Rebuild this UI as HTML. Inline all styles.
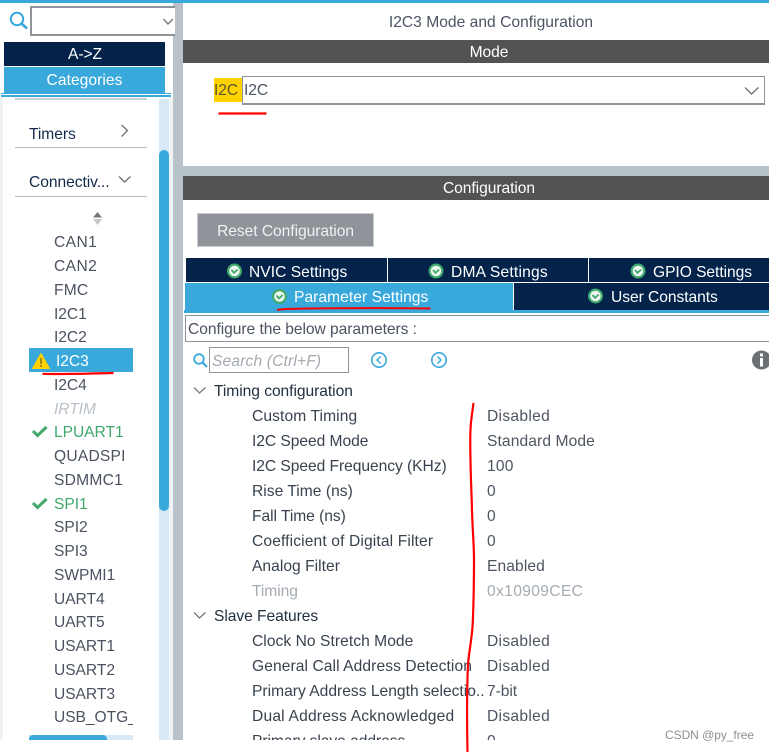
<!DOCTYPE html>
<html><head><meta charset="utf-8"><style>
html,body{margin:0;padding:0;background:#fff}
#p{position:relative;width:769px;height:752px;overflow:hidden;background:#fff;font-family:"Liberation Sans",sans-serif;font-size:15.6px;letter-spacing:-.05px;color:#3f4a5a}
#p div{position:absolute;white-space:nowrap}
.t{line-height:27px;height:24px}
.c{text-align:center}
.w{color:#fff}
.hd{color:#132a4a}
.lab{left:252px;color:#38424f}
.val{left:487px;color:#4d5561}
.it{left:54px;color:#4b5361}
.g{color:#3fa96b}
svg{position:absolute;overflow:visible}
</style></head><body><div id="p">
<!-- structural -->
<div style="left:0;top:0;width:769px;height:3px;background:#39a9dc"></div>
<div style="left:173px;top:3px;width:10px;height:737px;background:#b7c2c9"></div>
<div style="left:0;top:97px;width:3px;height:643px;background:#f0f2f5"></div>
<div style="left:169px;top:97px;width:4px;height:643px;background:#f0f2f5"></div>

<!-- sidebar search -->
<svg style="left:9px;top:11px" width="20" height="20" fill="none" stroke="#39a9dc"><circle cx="8" cy="8" r="6.2" stroke-width="2"/><path d="M12.5 12.5L18 17.5" stroke-width="2.6"/></svg>
<div style="left:30px;top:6px;width:143px;height:26px;border:2px solid #8e9499;border-right:none;background:#fff"></div>
<svg style="left:163px;top:18px" width="11" height="8" fill="none" stroke="#777"><path d="M0.5 1L5 6L10 1" stroke-width="1.4"/></svg>
<div class="c w t" style="left:5px;top:42px;width:160px;height:24px;line-height:26px;background:#03234b;box-shadow:-1px 0 0 #03234b">A-&gt;Z</div>
<div class="c w t" style="left:4px;top:67px;width:161px;height:26px;line-height:28px;background:#39a9dc;letter-spacing:.05px">Categories</div>
<div style="left:1px;top:93px;width:170px;height:1px;background:#39a9dc"></div>
<div style="left:1px;top:95px;width:170px;height:2px;background:#39a9dc"></div>

<div style="left:15px;top:98px;width:132px;height:2px;background:#c3cede"></div>
<div style="left:159px;top:99px;width:10px;height:641px;background:#d8e8f5"></div>
<div style="left:159px;top:150px;width:10px;height:361px;background:#39a9dc;border-radius:5px"></div>

<div class="t hd" style="left:29px;top:121px">Timers</div>
<svg style="left:120px;top:124px" width="10" height="14" fill="none" stroke="#777"><path d="M1.5 1L7.5 6.5L1.5 12.5" stroke-width="1.4"/></svg>
<div style="left:15px;top:147px;width:132px;height:1px;background:#b7bdc2"></div>
<div class="t hd" style="left:29px;top:169px;width:82px;overflow:hidden">Connectiv...</div>
<svg style="left:118px;top:175px" width="14" height="10" fill="none" stroke="#777"><path d="M1 1.5L6.5 7L12.5 1.5" stroke-width="1.4"/></svg>
<div style="left:15px;top:196px;width:132px;height:1px;background:#b7bdc2"></div>
<svg style="left:92px;top:212px" width="11" height="14"><path d="M5.5 0L10 5.5H1Z" fill="#777"/><path d="M1 7H10L5.5 13Z" fill="#c5c9cc"/></svg>

<div class="t it" style="top:229px;letter-spacing:.4px">CAN1</div>
<div class="t it" style="top:253px;letter-spacing:.4px">CAN2</div>
<div class="t it" style="top:277px;letter-spacing:.2px">FMC</div>
<div class="t it" style="top:301px">I2C1</div>
<div class="t it" style="top:324px">I2C2</div>
<div style="left:29px;top:348px;width:104px;height:24px;background:#39a9dc"></div>
<svg style="left:32px;top:353px" width="18" height="16"><path d="M9 0.5L17.5 15.5H0.5Z" fill="#ffd200" stroke="#ffd200" stroke-linejoin="round"/><rect x="8.2" y="5" width="1.6" height="6" fill="#8a7a20"/><rect x="8.2" y="12" width="1.6" height="2" fill="#8a7a20"/></svg>
<div class="t w" style="left:56px;top:348px">I2C3</div>
<div class="t it" style="top:372px">I2C4</div>
<div class="t it" style="top:396px;color:#b9c0c8;font-style:italic">IRTIM</div>
<svg style="left:32px;top:425px" width="16" height="13" fill="none" stroke="#3fa96b"><path d="M1 6L5.5 10.5L14.5 2" stroke-width="3"/></svg>
<div class="t it g" style="top:419px">LPUART1</div>
<div class="t it" style="top:443px;letter-spacing:.22px">QUADSPI</div>
<div class="t it" style="top:467px;letter-spacing:.25px">SDMMC1</div>
<svg style="left:32px;top:497px" width="16" height="13" fill="none" stroke="#3fa96b"><path d="M1 6L5.5 10.5L14.5 2" stroke-width="3"/></svg>
<div class="t it g" style="top:491px">SPI1</div>
<div class="t it" style="top:514px">SPI2</div>
<div class="t it" style="top:538px">SPI3</div>
<div class="t it" style="top:562px">SWPMI1</div>
<div class="t it" style="top:586px">UART4</div>
<div class="t it" style="top:609px">UART5</div>
<div class="t it" style="top:633px">USART1</div>
<div class="t it" style="top:657px">USART2</div>
<div class="t it" style="top:681px">USART3</div>
<div class="t it" style="top:704px;width:79px;overflow:hidden">USB_OTG_FS</div>
<div style="left:29px;top:735px;width:104px;height:5px;background:#d8e8f5"></div>
<div style="left:29px;top:735px;width:78px;height:5px;background:#39a9dc;border-radius:4px 4px 0 0"></div>
<svg style="left:42px;top:371px" width="72" height="5"><path d="M0.5 2.8C20 3.5 50 2.5 71.5 2" fill="none" stroke="#f00" stroke-width="2.2"/></svg>

<!-- header panels -->
<div class="t c" style="left:183px;top:9px;width:616px;color:#4b5563;letter-spacing:.02px">I2C3 Mode and Configuration</div>
<div class="t c w" style="left:183px;top:40px;width:612px;height:23px;line-height:25px;background:#525453">Mode</div>
<div style="left:183px;top:166px;width:586px;height:10px;background:#b7c2c9"></div>
<div class="t c w" style="left:183px;top:176px;width:612px;height:24px;line-height:26px;background:#525453">Configuration</div>
<div style="left:214px;top:78px;width:28px;height:24px;line-height:26px;background:#ffd200;color:#5a5530">I2C</div>
<div style="left:242px;top:76px;width:520px;height:26px;line-height:28px;border:1px solid #8e9499;border-bottom-width:2px;border-right-width:1px;padding-left:1px;background:#fff;color:#4b5563">I2C</div>
<svg style="left:744px;top:86px" width="16" height="10" fill="none" stroke="#777"><path d="M1 1.5L7.5 8L14.5 1.5" stroke-width="1.4"/></svg>
<svg style="left:218px;top:111px" width="50" height="5"><path d="M0.5 2.5H48.5" stroke="#f00" stroke-width="2.2"/></svg>

<!-- reset -->
<div class="t c" style="left:197px;top:213px;width:175px;height:32px;line-height:35px;background:#8e9499;border:1px solid #c7cbce;color:#f0f2f3">Reset Configuration</div>

<!-- tabs -->
<div style="left:186px;top:258px;width:201px;height:24px;background:#03234b"></div>
<div style="left:388px;top:258px;width:200px;height:24px;background:#03234b"></div>
<div style="left:589px;top:258px;width:180px;height:24px;background:#03234b"></div>
<div style="left:185px;top:283px;width:328px;height:27px;background:#39a9dc"></div>
<div style="left:514px;top:283px;width:255px;height:27px;background:#03234b"></div>
<div style="left:184px;top:310px;width:585px;height:3px;background:#39a9dc"></div>
<div class="t w" style="left:249px;top:259px;letter-spacing:.03px">NVIC Settings</div>
<div class="t w" style="left:451px;top:259px;letter-spacing:.2px">DMA Settings</div>
<div class="t w" style="left:653px;top:259px">GPIO Settings</div>
<div class="t w" style="left:294px;top:284px;letter-spacing:.05px">Parameter Settings</div>
<div class="t w" style="left:611px;top:284px">User Constants</div>
<svg style="left:0;top:0" width="769" height="320">
<defs><g id="k"><circle r="7.5" fill="#3fa96b"/><circle r="5.3" fill="#eef6f1"/><path d="M-3-1L-.5 1.8L3.2-1.5" fill="none" stroke="#3fa96b" stroke-width="1.8"/></g></defs>
<use href="#k" x="234.5" y="271"/><use href="#k" x="436" y="271"/><use href="#k" x="638" y="271"/><use href="#k" x="279.500" y="296.500"/><use href="#k" x="595.500" y="296"/>
</svg>
<svg style="left:276px;top:306px" width="156" height="6"><path d="M1 4C5 3 8 3 30 2.500C70 2 120 2 154.500 2.500" fill="none" stroke="#f00" stroke-width="2"/></svg>

<!-- configure box -->
<div style="left:185px;top:315px;width:584px;height:25px;border-top:1px solid #8e9499;border-left:1px solid #8e9499;border-bottom:1px solid #8e9499"></div>
<div class="t" style="left:188px;top:316px;color:#4b5260">Configure the below parameters :</div>

<!-- search row -->
<svg style="left:193px;top:353px" width="15" height="16" fill="none" stroke="#39a9dc"><circle cx="6" cy="6" r="4.800" stroke-width="1.800"/><path d="M9.500 9.500L14 14" stroke-width="2.200"/></svg>
<div style="left:209px;top:347px;width:138px;height:24px;border:1px solid #8e9499"></div>
<div class="t" style="left:212px;top:348px;color:#a3a9b0;font-style:italic;letter-spacing:.15px">Search (Ctrl+F)</div>
<svg style="left:370px;top:351px" width="80" height="18" fill="none" stroke="#39a9dc">
<circle cx="9" cy="9" r="7.200" stroke-width="1.600"/><path d="M10.500 5.500L7 9L10.500 12.500" stroke-width="1.500"/>
<circle cx="69" cy="9" r="7.200" stroke-width="1.600"/><path d="M67.500 5.500L71 9L67.500 12.500" stroke-width="1.500"/></svg>
<svg style="left:752px;top:350px" width="20" height="20"><circle cx="9.500" cy="10" r="9.500" fill="#6b6f73"/><rect x="8" y="8" width="3" height="8.500" fill="#fff"/><rect x="8" y="3.500" width="3" height="3" fill="#fff"/></svg>

<!-- tree -->
<div style="left:183px;top:378px;width:586px;height:362px;overflow:hidden">
<svg style="left:10px;top:8px" width="14" height="9" fill="none" stroke="#777"><path d="M1 1.500L6.500 7L12.500 1.500" stroke-width="1.300"/></svg>
<div class="t" style="left:31px;top:0;color:#22303f">Timing configuration</div>
<div class="t lab" style="left:69px;top:25px;letter-spacing:.1px">Custom Timing</div>
<div class="t lab" style="left:69px;top:50px">I2C Speed Mode</div>
<div class="t lab" style="left:69px;top:75px">I2C Speed Frequency (KHz)</div>
<div class="t lab" style="left:69px;top:100px;letter-spacing:.02px">Rise Time (ns)</div>
<div class="t lab" style="left:69px;top:125px">Fall Time (ns)</div>
<div class="t lab" style="left:69px;top:150px;letter-spacing:.13px">Coefficient of Digital Filter</div>
<div class="t lab" style="left:69px;top:175px;letter-spacing:.03px">Analog Filter</div>
<div class="t lab" style="left:69px;top:200px;color:#a5abb2">Timing</div>
<svg style="left:10px;top:233px" width="14" height="9" fill="none" stroke="#777"><path d="M1 1.500L6.500 7L12.500 1.500" stroke-width="1.300"/></svg>
<div class="t" style="left:31px;top:225px;color:#22303f">Slave Features</div>
<div class="t lab" style="left:69px;top:250px;letter-spacing:.05px">Clock No Stretch Mode</div>
<div class="t lab" style="left:69px;top:275px;letter-spacing:.08px">General Call Address Detection</div>
<div class="t lab" style="left:69px;top:300px;letter-spacing:.01px">Primary Address Length selectio..</div>
<div class="t lab" style="left:69px;top:325px;letter-spacing:.19px">Dual Address Acknowledged</div>
<div class="t lab" style="left:69px;top:350px">Primary slave address</div>
<div class="t val" style="left:304px;top:25px;letter-spacing:.3px">Disabled</div>
<div class="t val" style="left:304px;top:50px;letter-spacing:.1px">Standard Mode</div>
<div class="t val" style="left:304px;top:75px;letter-spacing:.2px">100</div>
<div class="t val" style="left:304px;top:100px">0</div>
<div class="t val" style="left:304px;top:125px">0</div>
<div class="t val" style="left:304px;top:150px">0</div>
<div class="t val" style="left:304px;top:175px;letter-spacing:.1px">Enabled</div>
<div class="t val" style="left:304px;top:200px;color:#a5abb2;letter-spacing:.35px">0x10909CEC</div>
<div class="t val" style="left:304px;top:250px;letter-spacing:.3px">Disabled</div>
<div class="t val" style="left:304px;top:275px;letter-spacing:.3px">Disabled</div>
<div class="t val" style="left:304px;top:300px">7-bit</div>
<div class="t val" style="left:304px;top:325px;letter-spacing:.3px">Disabled</div>
<div class="t val" style="left:304px;top:350px">0</div>
</div>

<!-- red curve -->
<svg style="left:0;top:0" width="769" height="752"><path d="M473.500 403C472.500 412 470.500 420 470.300 435C470 465 471.500 490 472 510C472.500 530 474 545 474 560C474 585 473.500 605 472.800 622C472 640 469 650 468 665C467 685 467 725 467.500 752" fill="none" stroke="#f00" stroke-width="2.200"/></svg>

<div style="left:665px;top:728px;height:15px;line-height:15px;font-size:12px;color:#8f8f8f;letter-spacing:-.05px">CSDN @py_free</div>
</div></body></html>
